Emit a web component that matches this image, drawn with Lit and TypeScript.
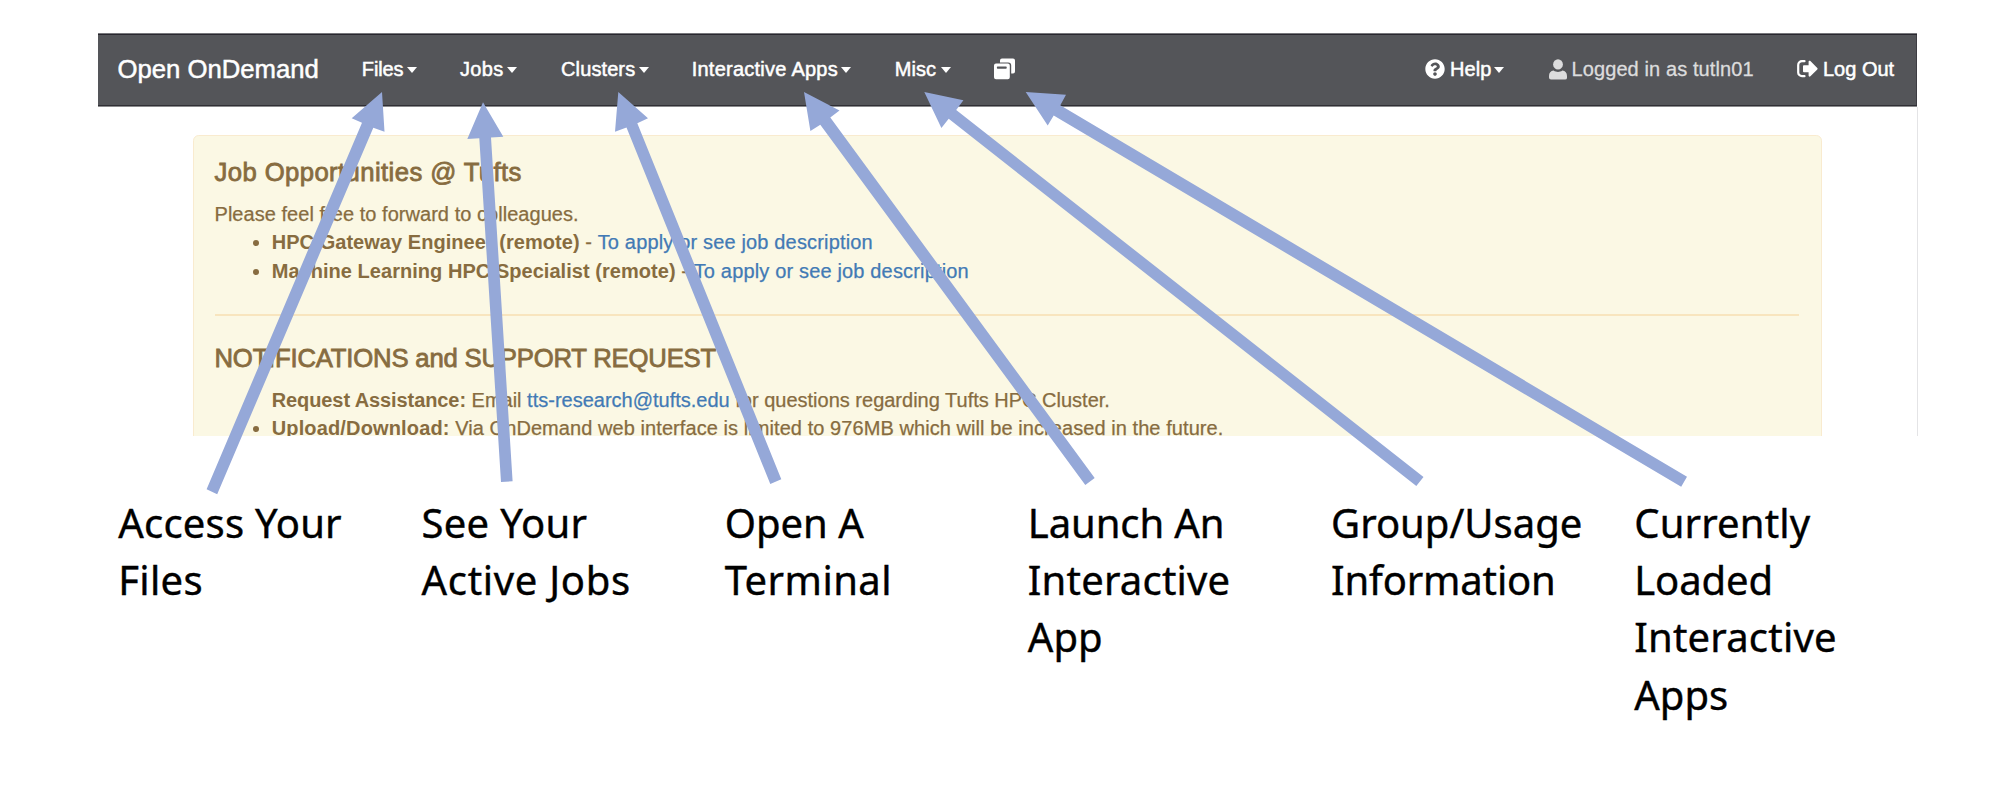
import { LitElement, html, css, svg } from "lit";
import { customElement } from "lit/decorators.js";

interface MenuItem { label: string; cls: string }
interface CaptionLine { text: string; spacing: number }

const MENUS: MenuItem[] = [
  { label: "Files", cls: "files" },
  { label: "Jobs", cls: "jobs" },
  { label: "Clusters", cls: "clusters" },
  { label: "Interactive Apps", cls: "apps" },
  { label: "Misc", cls: "misc" },
];

const CAPTIONS: CaptionLine[][] = [
  [{ text: "Access Your", spacing: 0.2 }, { text: "Files", spacing: 0.3 }],
  [{ text: "See Your", spacing: 0.3 }, { text: "Active Jobs", spacing: 0.7 }],
  [{ text: "Open A", spacing: 0 }, { text: "Terminal", spacing: 0.45 }],
  [{ text: "Launch An", spacing: -0.1 }, { text: "Interactive", spacing: 0.2 }, { text: "App", spacing: 0 }],
  [{ text: "Group/Usage", spacing: 0 }, { text: "Information", spacing: -0.15 }],
  [
    { text: "Currently", spacing: 0.15 },
    { text: "Loaded", spacing: -0.1 },
    { text: "Interactive", spacing: 0.2 },
    { text: "Apps", spacing: 0 },
  ],
];

const ARROWS: string[] = [
  "382,92 351.7,118.3 362,122.7 206.6,489.3 217.2,494.2 373.3,127.7 384.5,131.7",
  "483,102.3 467.3,139 479.3,138.3 501,482 512.6,481.3 491,137.5 503.3,136.8",
  "618.3,92 615,131.7 626.5,127.5 770.3,484 781.3,479.3 637.3,123.3 648,118.3",
  "804,92 810.4,131 820.3,124.8 1085.3,485 1094.7,478 830.3,117.6 839.5,110.4",
  "924.3,92 941.4,128 948.7,118.8 1416.3,486 1423.5,477 956.2,109.9 963.4,100.2",
  "1025.7,92 1047.7,125.6 1053.7,115.6 1681.2,486.8 1687,476.8 1060.3,105.2 1066,94.7",
];

@customElement("app-root")
export class AppRoot extends LitElement {
  static styles = css`
    :host {
      display: block;
      position: relative;
      width: 1998px;
      height: 798px;
      box-sizing: border-box;
      padding: 33px 80px 0 98px;
      overflow: hidden;
      background: #fff;
      font: 20px/28.57px "Liberation Sans", Arial, sans-serif;
    }
    .frame {
      box-sizing: border-box;
      width: 1820px;
      height: 403px;
      overflow: hidden;
    }
    .navbar {
      box-sizing: border-box;
      width: 1819px;
      height: 74px;
      display: flex;
      align-items: center;
      padding: 0 17.5px 2px 19.5px;
      background: #545559;
      border-top: 1px solid #77777b;
      border-bottom: 1px solid #8b8b8d;
      box-shadow: inset 0 1px #29272f, inset 0 -1px #302f35, inset -1px 0 #3d3c42;
      color: #fff;
      white-space: nowrap;
      -webkit-text-stroke: 0.5px;
    }
    .brand { width: 244.3px; font-size: 25.7px; letter-spacing: 0; }
    .menu { display: flex; align-items: center; }
    .label { display: inline-block; }
    .caret {
      width: 0;
      border: 5.7px solid transparent;
      border-top: 6px solid currentColor;
      border-bottom: 0;
      margin-top: 2px;
    }
    .files { width: 98.1px; } .files .label { width: 45px; letter-spacing: -0.1px; }
    .jobs { width: 101.2px; } .jobs .label { width: 47px; letter-spacing: 0.35px; }
    .clusters { width: 130.6px; } .clusters .label { width: 77.6px; letter-spacing: 0.1px; }
    .apps { width: 203px; } .apps .label { width: 149px; letter-spacing: 0.25px; }
    .misc { width: 99.3px; } .misc .label { width: 46px; letter-spacing: 0.1px; }
    .right { margin-left: auto; display: flex; align-items: center; }
    .icon { display: block; flex: none; }
    .help { width: 124px; } .help .label { width: 44px; margin-left: 5.4px; letter-spacing: 0.1px; }
    .user { width: 248px; color: #dcdcdd; -webkit-text-stroke: 0.3px; }
    .user .label { margin-left: 5px; letter-spacing: 0.1px; }
    .logout { width: 103px; } .logout .label { margin-left: 5.5px; }
    .page {
      height: 329px;
      padding: 28px 94.5px 0;
      border-right: 1.5px solid #e4e4e6;
      box-sizing: border-box;
    }
    .alert {
      box-sizing: border-box;
      width: 1629.5px;
      height: 420px;
      padding: 21.6px 22px 0 21px;
      border: 1.5px solid #f9ebcf;
      border-radius: 5.7px;
      background: #fbf8e4;
      color: #876c40;
      white-space: nowrap;
      -webkit-text-stroke: 0.25px;
    }
    .title {
      margin: 0 0 13.7px;
      font-size: 25.7px;
      line-height: 28.3px;
      font-weight: 400;
      -webkit-text-stroke: 0.8px;
    }
    .jobs-title { letter-spacing: 0.4px; }
    .notes-title { letter-spacing: -0.2px; }
    .intro { margin: 0; letter-spacing: 0.04px; }
    .list { margin: 0; padding: 0 0 0 57.2px; }
    .plain { list-style: none; }
    .strong { font-weight: 700; letter-spacing: 0.04px; -webkit-text-stroke: 0; }
    .strong.tight { letter-spacing: -0.09px; }
    .strong.loose { letter-spacing: 0.15px; }
    .dash { letter-spacing: 0.1px; }
    .link { color: #427ab5; letter-spacing: 0.16px; }
    .mail { color: #427ab5; }
    .upload { letter-spacing: 0.07px; }
    .rule { height: 2px; margin: 28.6px 0 28px; background: #f8e5be; }
    .captions {
      display: grid;
      grid-template-columns: repeat(6, 303.2px);
      margin: 57.8px 0 0 20.3px;
      color: #000;
      font: 40px/57.3px "Noto Sans", sans-serif;
      -webkit-text-stroke: 0.4px;
      white-space: nowrap;
    }
    .arrows {
      position: absolute;
      left: 0;
      top: 0;
      fill: #95a8d8;
      pointer-events: none;
    }
  `;

  private menu(item: MenuItem) {
    return html`<div class="menu ${item.cls}"><span class="label">${item.label}</span><span class="caret"></span></div>`;
  }

  render() {
    return html`
      <div class="frame">
        <nav class="navbar">
          <div class="brand">Open OnDemand</div>
          ${MENUS.map((m) => this.menu(m))}
          <svg class="icon" width="22" height="22" viewBox="0 0 22 22" fill="#fff">
            <path d="M8 0.5H19a2 2 0 0 1 2 2V13.5a2 2 0 0 1-2 2H17.2V7.5a3 3 0 0 0-3-3H6V2.5a2 2 0 0 1 2-2Z" />
            <path fill-rule="evenodd" d="M2 5.6H13.8a2 2 0 0 1 2 2V19.2a2 2 0 0 1-2 2H2a2 2 0 0 1-2-2V7.6a2 2 0 0 1 2-2ZM3.6 8.4a.7.7 0 0 0-.7.7V10a.7.7 0 0 0 .7.7H12a.7.7 0 0 0 .7-.7V9.1a.7.7 0 0 0-.7-.7Z" />
          </svg>
          <div class="right">
            <div class="menu help">
              <svg class="icon" width="20" height="20" viewBox="0 0 512 512" fill="#fff">
                <path d="M504 256c0 137-111 248-248 248S8 393 8 256 119 8 256 8s248 111 248 248zM262.7 90c-54.5 0-89.3 23-116.5 63.8-3.5 5.3-2.4 12.4 2.7 16.3l34.7 26.3c5.2 3.9 12.6 3 16.7-2.1 17.9-22.7 30.1-35.8 57.3-35.8 20.4 0 45.7 13.1 45.7 33 0 15-12.4 22.7-32.5 34C247.1 238.5 216 255 216 296v4c0 6.6 5.4 12 12 12h56c6.6 0 12-5.4 12-12v-1.3c0-28.5 83.2-29.6 83.2-106.7 0-58-60.2-102-116.5-102zM256 338c-25.4 0-46 20.6-46 46s20.6 46 46 46 46-20.6 46-46-20.6-46-46-46z" />
              </svg>
              <span class="label">Help</span><span class="caret"></span>
            </div>
            <div class="menu user">
              <svg class="icon" width="18" height="21" viewBox="0 0 18 21" fill="currentColor">
                <ellipse cx="9" cy="5.4" rx="4.9" ry="5.2" />
                <path d="M4.6 11.6C6 12.6 7.5 13 9 13s3-.4 4.4-1.4C16.3 12 18 14 18 17v1.5A2 2 0 0 1 16 20.6H2a2 2 0 0 1-2-2V17c0-3 1.7-5 4.6-5.4Z" />
              </svg>
              <span class="label">Logged in as tutln01</span>
            </div>
            <div class="menu logout">
              <svg class="icon" width="21" height="18" viewBox="0 0 21 18" fill="#fff">
                <path d="M7.5 1.2H5A3.8 3.8 0 0 0 1.2 5V12.4A3.8 3.8 0 0 0 5 16.2H7.5" fill="none" stroke="#fff" stroke-width="2.2" stroke-linecap="round" />
                <path d="M6 6.2a.9.9 0 0 1 .9-.9H11.6V1.8C11.6.8 12.7.4 13.4 1.1L20.3 8a1 1 0 0 1 0 1.4L13.4 16.3c-.7.7-1.8.3-1.8-.7V12.2H6.9a.9.9 0 0 1-.9-.9Z" />
              </svg>
              <span class="label">Log Out</span>
            </div>
          </div>
        </nav>
        <div class="page">
          <section class="alert">
            <h4 class="title jobs-title">Job Opportunities @ Tufts</h4>
            <p class="intro">Please feel free to forward to colleagues.</p>
            <ul class="list">
              <li><span class="strong">HPC Gateway Engineer (remote)</span><span class="dash"> - </span><a class="link">To apply or see job description</a></li>
              <li><span class="strong">Machine Learning HPC Specialist (remote)</span><span class="dash"> - </span><a class="link">To apply or see job description</a></li>
            </ul>
            <div class="rule"></div>
            <h4 class="title notes-title">NOTIFICATIONS and SUPPORT REQUEST</h4>
            <ul class="list">
              <li class="plain"><span class="strong tight">Request Assistance:</span> Email <a class="mail">tts-research@tufts.edu</a> for questions regarding Tufts HPC Cluster.</li>
              <li><span class="strong loose">Upload/Download:</span> <span class="upload">Via OnDemand web interface is limited to 976MB which will be increased in the future.</span></li>
            </ul>
          </section>
        </div>
      </div>
      <div class="captions">
        ${CAPTIONS.map((lines) => html`<div>${lines.map((l) => html`<div style="letter-spacing:${l.spacing}px">${l.text}</div>`)}</div>`)}
      </div>
      <svg class="arrows" width="1998" height="798" viewBox="0 0 1998 798">
        ${ARROWS.map((p) => svg`<polygon points=${p} />`)}
      </svg>
    `;
  }
}
